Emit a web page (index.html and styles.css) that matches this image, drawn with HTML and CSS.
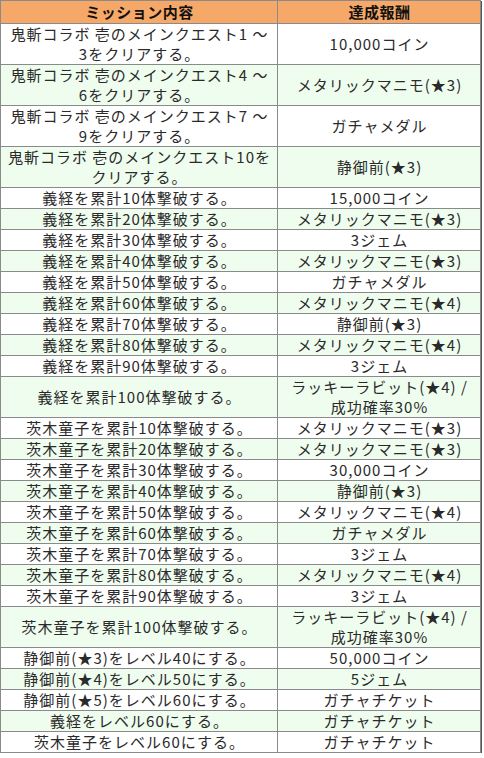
FILE: index.html
```html
<!DOCTYPE html>
<html lang="ja">
<head>
<meta charset="utf-8">
<link rel="stylesheet" href="styles.css">
</head>
<body>
<table class="missions">
<thead>
<tr><th class="c1">ミッション内容</th><th class="c2">達成報酬</th></tr>
</thead>
<tbody>
<tr><td>鬼斬コラボ 壱のメインクエスト1 ～<br>3をクリアする。</td><td>10,000コイン</td></tr>
<tr><td>鬼斬コラボ 壱のメインクエスト4 ～<br>6をクリアする。</td><td>メタリックマニモ(★3)</td></tr>
<tr><td>鬼斬コラボ 壱のメインクエスト7 ～<br>9をクリアする。</td><td>ガチャメダル</td></tr>
<tr><td>鬼斬コラボ 壱のメインクエスト10を<br>クリアする。</td><td>静御前(★3)</td></tr>
<tr><td>義経を累計10体撃破する。</td><td>15,000コイン</td></tr>
<tr><td>義経を累計20体撃破する。</td><td>メタリックマニモ(★3)</td></tr>
<tr><td>義経を累計30体撃破する。</td><td>3ジェム</td></tr>
<tr><td>義経を累計40体撃破する。</td><td>メタリックマニモ(★3)</td></tr>
<tr><td>義経を累計50体撃破する。</td><td>ガチャメダル</td></tr>
<tr><td>義経を累計60体撃破する。</td><td>メタリックマニモ(★4)</td></tr>
<tr><td>義経を累計70体撃破する。</td><td>静御前(★3)</td></tr>
<tr><td>義経を累計80体撃破する。</td><td>メタリックマニモ(★4)</td></tr>
<tr><td>義経を累計90体撃破する。</td><td>3ジェム</td></tr>
<tr><td>義経を累計100体撃破する。</td><td>ラッキーラビット(★4) /<br>成功確率30%</td></tr>
<tr><td>茨木童子を累計10体撃破する。</td><td>メタリックマニモ(★3)</td></tr>
<tr><td>茨木童子を累計20体撃破する。</td><td>メタリックマニモ(★3)</td></tr>
<tr><td>茨木童子を累計30体撃破する。</td><td>30,000コイン</td></tr>
<tr><td>茨木童子を累計40体撃破する。</td><td>静御前(★3)</td></tr>
<tr><td>茨木童子を累計50体撃破する。</td><td>メタリックマニモ(★4)</td></tr>
<tr><td>茨木童子を累計60体撃破する。</td><td>ガチャメダル</td></tr>
<tr><td>茨木童子を累計70体撃破する。</td><td>3ジェム</td></tr>
<tr><td>茨木童子を累計80体撃破する。</td><td>メタリックマニモ(★4)</td></tr>
<tr><td>茨木童子を累計90体撃破する。</td><td>3ジェム</td></tr>
<tr><td>茨木童子を累計100体撃破する。</td><td>ラッキーラビット(★4) /<br>成功確率30%</td></tr>
<tr><td>静御前(★3)をレベル40にする。</td><td>50,000コイン</td></tr>
<tr><td>静御前(★4)をレベル50にする。</td><td>5ジェム</td></tr>
<tr><td>静御前(★5)をレベル60にする。</td><td>ガチャチケット</td></tr>
<tr><td>義経をレベル60にする。</td><td>ガチャチケット</td></tr>
<tr><td>茨木童子をレベル60にする。</td><td>ガチャチケット</td></tr>
</tbody>
</table>
</body>
</html>
```
FILE: styles.css
```css
html, body {
  margin: 0;
  padding: 0;
  background: #ffffff;
}
.missions {
  border-collapse: collapse;
  width: 481px;
  table-layout: fixed;
  font-family: "Noto Sans CJK JP", "Noto Sans", sans-serif;
  font-size: 15px;
  letter-spacing: 1px;
  color: #2a2a2a;
  box-shadow: 1px 1px 0 #555555;
  border: 1px solid #666666;
}
.missions th, .missions td {
  border: 1px solid #8a8a8a;
  text-align: center;
  padding: 0 0 0 1px;
  line-height: 20px;
  white-space: nowrap;
}
.missions th {
  background: #f6a868;
  font-weight: bold;
  letter-spacing: 0.5px;
  height: 22px;
  line-height: 22px;
  color: #111111;
}
.missions .c1 { width: 275px; }
.missions tbody tr:nth-child(even) td {
  background: #effdef;
}
```
